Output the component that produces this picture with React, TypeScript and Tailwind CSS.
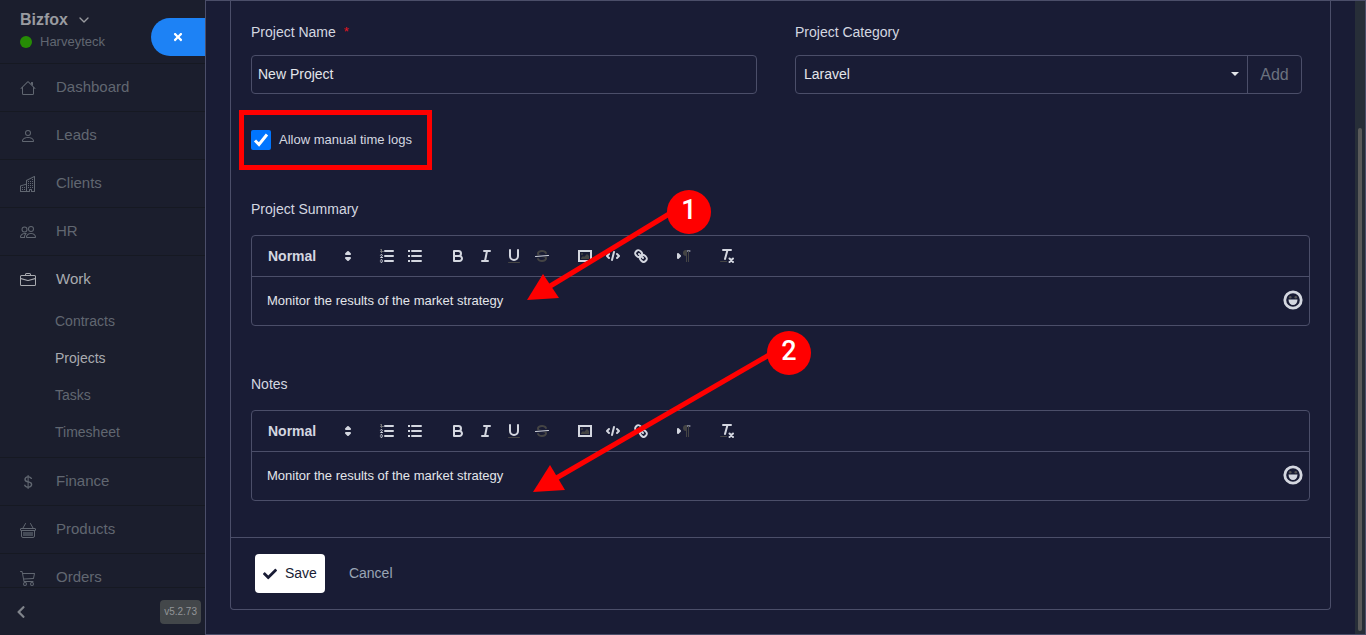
import type { ReactNode } from 'react'
import { BsBriefcase, BsCart3, BsCurrencyDollar, BsPeople, BsPerson } from 'react-icons/bs'
import { FaCheck, FaChevronLeft, FaTimes } from 'react-icons/fa'
import { FiChevronDown } from 'react-icons/fi'

function HouseIcon() {
  return (
    <svg viewBox="0 0 16 16" fill="currentColor" className="size-4">
      <path
        fillRule="evenodd"
        d="M2 13.5V7h1v6.5a.5.5 0 0 0 .5.5h9a.5.5 0 0 0 .5-.5V7h1v6.5a1.5 1.5 0 0 1-1.5 1.5h-9A1.5 1.5 0 0 1 2 13.5zm11-11V6l-2-2V2.5a.5.5 0 0 1 .5-.5h1a.5.5 0 0 1 .5.5z"
      />
      <path
        fillRule="evenodd"
        d="M7.293 1.5a1 1 0 0 1 1.414 0l6.647 6.646a.5.5 0 0 1-.708.708L8 2.207 1.354 8.854a.5.5 0 1 1-.708-.708L7.293 1.5z"
      />
    </svg>
  )
}

function BuildingIcon() {
  return (
    <svg viewBox="0 0 16 16" fill="currentColor" className="size-4">
      <path
        fillRule="evenodd"
        d="M14.763.075A.5.5 0 0 1 15 .5v15a.5.5 0 0 1-.5.5h-3a.5.5 0 0 1-.5-.5V14h-1v1.5a.5.5 0 0 1-.5.5h-9a.5.5 0 0 1-.5-.5V10a.5.5 0 0 1 .342-.474L6 7.64V4.5a.5.5 0 0 1 .276-.447l8-4a.5.5 0 0 1 .487.022zM6 8.694 1 10.36V15h5V8.694zM7 15h2v-1.5a.5.5 0 0 1 .5-.5h2a.5.5 0 0 1 .5.5V15h2V1.309l-7 3.5V15z"
      />
      <path d="M2 11h1v1H2v-1zm2 0h1v1H4v-1zm-2 2h1v1H2v-1zm2 0h1v1H4v-1zm4-4h1v1H8V9zm2 0h1v1h-1V9zm-2 2h1v1H8v-1zm2 0h1v1h-1v-1zm2-2h1v1h-1V9zm0 2h1v1h-1v-1zM8 7h1v1H8V7zm2 0h1v1h-1V7zm2 0h1v1h-1V7zM8 5h1v1H8V5zm2 0h1v1h-1V5zm2 0h1v1h-1V5zm0-2h1v1h-1V3z" />
    </svg>
  )
}

function BasketIcon() {
  return (
    <svg viewBox="0 0 16 16" fill="none" stroke="currentColor" className="size-4">
      <path d="M5.5 1.5L3 6M10.5 1.5L13 6" strokeLinecap="round" />
      <rect x="0.5" y="6.5" width="15" height="2" rx="0.5" />
      <path d="M1.5 8.5V14a1.5 1.5 0 0 0 1.5 1.5h10a1.5 1.5 0 0 0 1.5-1.5V8.5" />
      <path d="M3 10H13V14H3z" fill="currentColor" stroke="none" opacity="0.6" />
    </svg>
  )
}

function NavItem({
  icon,
  label,
  active = false,
  children,
}: {
  icon: ReactNode
  label: string
  active?: boolean
  children?: ReactNode
}) {
  return (
    <li className="border-b border-[#161922]">
      <a
        href="#"
        className={
          active
            ? 'flex h-[47px] items-center gap-5 pl-5 text-[15px] text-[#a9abb0]'
            : 'flex h-[47px] items-center gap-5 pl-5 text-[15px] text-[#616771]'
        }
      >
        <span className="flex size-4 items-center justify-center">{icon}</span>
        {label}
      </a>
      {children}
    </li>
  )
}

const workLinks = ['Contracts', 'Projects', 'Tasks', 'Timesheet']

function Sidebar() {
  return (
    <aside className="relative flex w-[205px] shrink-0 flex-col bg-[#1b1e2d]">
      <header className="h-16 shrink-0 border-b border-[#161922] pt-2.5 pl-5">
        <button
          type="button"
          className="flex h-5 items-center gap-2 text-[16px] font-bold text-[#999ba0]"
        >
          Bizfox
          <FiChevronDown className="size-4" />
        </button>
        <p className="mt-0.5 flex h-5 items-center gap-2 text-[13px] text-[#616771]">
          <span className="size-3 rounded-full bg-[#268c05]" />
          Harveyteck
        </p>
      </header>

      <button
        type="button"
        aria-label="Close"
        className="absolute top-[18px] right-0 flex h-[38px] w-[54px] items-center justify-center rounded-l-full bg-[#1d82f5] text-white"
      >
        <FaTimes className="size-3" />
      </button>

      <nav className="min-h-0 flex-1 overflow-hidden">
        <ul>
          <NavItem icon={<HouseIcon />} label="Dashboard" />
          <NavItem icon={<BsPerson className="size-4" />} label="Leads" />
          <NavItem icon={<BuildingIcon />} label="Clients" />
          <NavItem icon={<BsPeople className="size-4" />} label="HR" />
          <NavItem icon={<BsBriefcase className="size-4" />} label="Work" active>
            <ul className="flex h-[154px] flex-col pb-1.5">
              {workLinks.map((link) => (
                <li key={link} className="flex flex-1 items-center pl-[55px]">
                  <a
                    href="#"
                    className={
                      link === 'Projects'
                        ? 'text-[14px] text-[#a9abb0]'
                        : 'text-[14px] text-[#616771]'
                    }
                  >
                    {link}
                  </a>
                </li>
              ))}
            </ul>
          </NavItem>
          <NavItem icon={<BsCurrencyDollar className="size-4" />} label="Finance" />
          <NavItem icon={<BasketIcon />} label="Products" />
          <NavItem icon={<BsCart3 className="size-4" />} label="Orders" />
        </ul>
      </nav>

      <footer className="flex h-12 shrink-0 items-center justify-between border-t border-[#161922] pr-1 pl-3.5">
        <button type="button" aria-label="Collapse menu" className="text-[#80848b]">
          <FaChevronLeft className="size-3.5" />
        </button>
        <span className="flex h-6 items-center rounded-sm bg-[#43474a] px-1 text-[10px] text-[#929598]">
          v5.2.73
        </span>
      </footer>
    </aside>
  )
}

function ToolButton({ label, children }: { label: string; children: ReactNode }) {
  return (
    <button type="button" aria-label={label} className="h-6 w-7 px-[5px]">
      <svg
        viewBox="0 0 18 18"
        fill="none"
        stroke="#d4d7e0"
        strokeWidth="2"
        strokeLinecap="round"
        strokeLinejoin="round"
        className="size-[18px]"
      >
        {children}
      </svg>
    </button>
  )
}

function Toolbar() {
  return (
    <div className="flex h-[41px] items-center gap-[15px] border-b border-[#4b4e69] px-2">
      <button
        type="button"
        className="flex h-6 w-[98px] items-center justify-between pr-px pl-2 text-[14px] font-bold text-[#d4d7e0]"
      >
        Normal
        <svg
          viewBox="0 0 18 18"
          fill="#d4d7e0"
          stroke="#d4d7e0"
          strokeWidth="2"
          strokeLinejoin="round"
          className="size-[18px]"
        >
          <polygon points="7 11 9 13 11 11 7 11" />
          <polygon points="7 7 9 5 11 7 7 7" />
        </svg>
      </button>
      <div className="flex">
        <ToolButton label="Ordered list">
          <path d="M7 4H15M7 9H15M7 14H15" />
          <path d="M2.5 4.5H5.5" strokeWidth="1" stroke="#6d6f78" />
          <path
            fill="#777"
            stroke="none"
            d="M3.5,6A0.5,0.5,0,0,1,3,5.5V3.085l-0.276.138A0.5,0.5,0,0,1,2.053,3c-0.124-.247-0.023-0.324.224-0.447l1-.5A0.5,0.5,0,0,1,4,2.5v3A0.5,0.5,0,0,1,3.5,6Z"
          />
          <path
            strokeWidth="1"
            d="M4.5,10.5h-2c0-.234,1.85-1.076,1.85-2.234A0.959,0.959,0,0,0,2.5,8.156"
          />
          <path
            strokeWidth="1"
            d="M2.5,14.846a0.959,0.959,0,0,0,1.85-.109A0.7,0.7,0,0,0,3.75,14a0.688,0.688,0,0,0,.6-0.736,0.959,0.959,0,0,0-1.85-.109"
          />
        </ToolButton>
        <ToolButton label="Bullet list">
          <path d="M6 4H15M6 9H15M6 14H15" />
          <path d="M2 4H4M2 9H4M2 14H4" strokeLinecap="butt" />
        </ToolButton>
      </div>
      <div className="flex">
        <ToolButton label="Bold">
          <path d="M5,4H9.5A2.5,2.5,0,0,1,12,6.5v0A2.5,2.5,0,0,1,9.5,9H5Z" />
          <path d="M5,9h5.5A2.5,2.5,0,0,1,13,11.5v0A2.5,2.5,0,0,1,10.5,14H5Z" />
        </ToolButton>
        <ToolButton label="Italic">
          <path d="M7 4H13M5 14H11M8 14L10 4" />
        </ToolButton>
        <ToolButton label="Underline">
          <path d="M5,3V9a4.012,4.012,0,0,0,4,4H9a4.012,4.012,0,0,0,4-4V3" />
          <rect x="3" y="15" width="12" height="1" rx="0.5" fill="#444" stroke="none" />
        </ToolButton>
        <ToolButton label="Strikethrough">
          <g fill="#444" stroke="none">
            <path d="M9.007,8C6.542,7.791,6,7.519,6,6.5,6,5.792,7.283,5,9,5c1.571,0,2.765.679,2.969,1.309a1,1,0,0,0,1.9-.617C13.356,4.106,11.354,3,9,3,6.2,3,4,4.538,4,6.5a3.2,3.2,0,0,0,.5,1.843Z" />
            <path d="M8.984,10C11.457,10.208,12,10.479,12,11.5c0,0.708-1.283,1.5-3,1.5-1.571,0-2.765-.679-2.969-1.309a1,1,0,1,0-1.9.617C4.644,13.894,6.646,15,9,15c2.8,0,5-1.538,5-3.5a3.2,3.2,0,0,0-.5-1.843Z" />
          </g>
          <path d="M15.5 8.5L2.5 9.5" strokeWidth="1" />
        </ToolButton>
      </div>
      <div className="flex">
        <ToolButton label="Image">
          <rect x="3" y="4" width="12" height="10" strokeLinejoin="miter" />
          <g fill="#444" stroke="none">
            <circle cx="6" cy="7" r="1" />
            <polygon points="5 12 5 11 7 9 8 10 11 7 13 9 13 12 5 12" />
          </g>
        </ToolButton>
        <ToolButton label="Code">
          <path d="M5 7L3 9L5 11M13 7L15 9L13 11M10 5L8 13" />
        </ToolButton>
        <ToolButton label="Link">
          <path d="M7 7L11 11" />
          <path d="M8.9,4.577a3.476,3.476,0,0,1,.36,4.679A3.476,3.476,0,0,1,4.577,8.9C3.185,7.5,2.035,6.4,4.217,4.217S7.5,3.185,8.9,4.577Z" />
          <path d="M13.423,9.1a3.476,3.476,0,0,0-4.679-.36,3.476,3.476,0,0,0,.36,4.679c1.392,1.392,2.5,2.542,4.679.36S14.815,10.5,13.423,9.1Z" />
        </ToolButton>
      </div>
      <ToolButton label="Text direction">
        <polygon points="3 11 5 9 3 7 3 11" fill="#d4d7e0" />
        <path d="M15 4H11" strokeWidth="1" />
        <g fill="#444" stroke="none">
          <path d="M11,3a3,3,0,0,0,0,6h1V3H11Z" />
          <rect x="11" y="4" width="1" height="11" />
          <rect x="13" y="4" width="1" height="11" />
        </g>
      </ToolButton>
      <ToolButton label="Clear formatting">
        <path d="M5 3H13M9.5 3L7 12" />
        <path d="M11.5 11.5L15 15M15 11.5L11.5 15" />
        <rect x="2" y="14" width="7" height="1" rx="0.5" fill="#444" stroke="none" />
      </ToolButton>
    </div>
  )
}

function RichEditor({ id, label, value }: { id: string; label: string; value: string }) {
  return (
    <div className="mt-12">
      <label htmlFor={id} className="block h-5 text-[14px] leading-5">
        {label}
      </label>
      <div className="mt-4 rounded border border-[#4b4e69]">
        <Toolbar />
        <div className="flex h-12 items-center pr-1.5 pl-[15px]">
          <input
            id={id}
            defaultValue={value}
            className="min-w-0 flex-1 bg-transparent text-[13px] text-[#e3e5ea] outline-none"
          />
          <button type="button" aria-label="Insert emoji" className="pb-0.5">
            <svg viewBox="0 0 20 20" className="size-5">
              <circle cx="10" cy="10" r="8.2" fill="none" stroke="#d4d7e0" strokeWidth="2.8" />
              <circle cx="7.2" cy="7.2" r="1.3" fill="#555" />
              <circle cx="12.8" cy="7.2" r="1.3" fill="#555" />
              <path d="M5.5 9.5h9a4.5 5.5 0 0 1-9 0Z" fill="#d4d7e0" />
            </svg>
          </button>
        </div>
      </div>
    </div>
  )
}

function Callout({
  number,
  className,
  width,
  height,
  tail,
  head,
}: {
  number: number
  className: string
  width: number
  height: number
  tail: string
  head: string
}) {
  return (
    <div className={`pointer-events-none absolute ${className}`}>
      <svg width={width} height={height}>
        <path d={tail} stroke="#f00" strokeWidth="5" />
        <polygon points={head} fill="#f00" />
      </svg>
      <span className="absolute top-0 right-0 flex size-11 items-center justify-center rounded-full bg-[#f00] pb-1 font-['Roboto'] text-[27px] font-medium text-white">
        {number}
      </span>
    </div>
  )
}

export default function App() {
  return (
    <div className="flex h-screen overflow-hidden bg-[#191c35] font-['Liberation_Sans',Arial,sans-serif] text-[#d4d7e0]">
      <Sidebar />

      <main className="relative flex min-w-0 flex-1 border border-[#4b4e69]">
        <div className="min-w-0 flex-1 overflow-hidden px-6">
          <form className="rounded-b border border-t-0 border-[#4b4e69]">
            <div className="px-5 pt-[21px] pb-9">
              <div className="grid grid-cols-[506fr_507fr] gap-[38px] pr-2">
                <div>
                  <label htmlFor="project-name" className="flex gap-2 text-[14px] leading-5">
                    Project Name
                    <span className="text-[13px] text-[#e8141e]">*</span>
                  </label>
                  <input
                    id="project-name"
                    defaultValue="New Project"
                    className="mt-[13px] block h-[39px] w-full rounded border border-[#4b4e69] bg-transparent px-1.5 pb-px text-[14px] text-[#e3e5ea]"
                  />
                </div>
                <div>
                  <label htmlFor="project-category" className="block text-[14px] leading-5">
                    Project Category
                  </label>
                  <div className="mt-[13px] flex h-[39px] rounded border border-[#4b4e69]">
                    <div className="relative flex-1">
                      <select
                        id="project-category"
                        className="h-full w-full appearance-none bg-transparent pl-2 text-[14px] text-[#e3e5ea]"
                      >
                        <option>Laravel</option>
                      </select>
                      <svg
                        viewBox="0 0 8 4"
                        className="pointer-events-none absolute top-4 right-2 h-1 w-2"
                      >
                        <path d="M0 0h8L4 4z" fill="#e3e5ea" />
                      </svg>
                    </div>
                    <button
                      type="button"
                      className="w-[54px] border-l border-[#4b4e69] text-[16px] text-[#6b727f]"
                    >
                      Add
                    </button>
                  </div>
                </div>
              </div>

              <div className="relative mt-9 flex h-[21px] items-start">
                <label className="flex items-center gap-2 text-[13px]">
                  <span className="relative flex size-5">
                    <input
                      type="checkbox"
                      defaultChecked
                      className="peer size-5 appearance-none rounded-xs border border-[#4b4e69] checked:border-0 checked:bg-[#0075ff]"
                    />
                    <svg
                      viewBox="0 0 20 20"
                      className="pointer-events-none absolute inset-0 hidden size-5 peer-checked:block"
                    >
                      <path d="M4 10.5l4 4L16 4.5" fill="none" stroke="#fff" strokeWidth="3" />
                    </svg>
                  </span>
                  Allow manual time logs
                </label>
                <span className="pointer-events-none absolute -top-5 -left-3 h-[60px] w-[193px] border-5 border-[#f00]" />
              </div>

              <RichEditor
                id="summary"
                label="Project Summary"
                value="Monitor the results of the market strategy"
              />
              <RichEditor
                id="notes"
                label="Notes"
                value="Monitor the results of the market strategy"
              />
            </div>

            <div className="flex items-center gap-6 border-t border-[#4b4e69] px-6 py-4">
              <button
                type="submit"
                className="flex h-[39px] items-center gap-2 rounded bg-white px-2 text-[14px] text-[#191c35]"
              >
                <FaCheck className="size-3.5" />
                Save
              </button>
              <a href="#" className="text-[14px] text-[#99a5b5]">
                Cancel
              </a>
            </div>
          </form>
        </div>

        {/* Scrollbar */}
        <div className="flex w-2.5 shrink-0 justify-center bg-[#272e38] pt-[127px] pb-[3px]">
          <div className="w-1 rounded-full bg-[#5a5a5a]" />
        </div>

        <Callout
          number={1}
          className="top-[189px] left-[321px]"
          width={184}
          height={112}
          tail="M142 24L20 98"
          head="0,110 16,84 32,108"
        />
        <Callout
          number={2}
          className="top-[330px] left-[327px]"
          width={278}
          height={163}
          tail="M236 24L20 149"
          head="0,161 17,134 32,159"
        />
      </main>
    </div>
  )
}
